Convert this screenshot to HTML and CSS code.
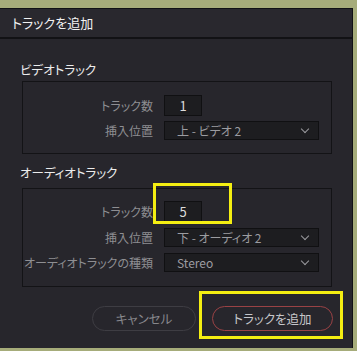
FILE: index.html
```html
<!DOCTYPE html>
<html lang="ja">
<head>
    <meta charset="UTF-8">
    <title>トラックを追加</title>
    <link rel="stylesheet" href="styles.css">
</head>
<body>
    <div class="dialog">
        <div class="titlebar">トラックを追加</div>
        <div class="content">
            <h2 class="section-title first">ビデオトラック</h2>
            <div class="group video">
                <label>トラック数</label>
                <div class="field num">1</div>
                <label>挿入位置</label>
                <div class="field select">上 - ビデオ 2<span class="chev"></span></div>
            </div>

            <h2 class="section-title">オーディオトラック</h2>
            <div class="group audio">
                <label>トラック数</label>
                <div class="field num">5</div>
                <label>挿入位置</label>
                <div class="field select">下 - オーディオ 2<span class="chev"></span></div>
                <label>オーディオトラックの種類</label>
                <div class="field select">Stereo<span class="chev"></span></div>
            </div>

            <div class="actions">
                <button class="btn cancel">キャンセル</button>
                <button class="btn add">トラックを追加</button>
            </div>
        </div>
        <div class="mark mark-count"></div>
        <div class="mark mark-add"></div>
    </div>
</body>
</html>
```

FILE: styles.css
```css
body {
    margin: 0;
    background-color: #a6ac7a;
    font-family: "Noto Sans CJK JP", "Noto Sans", sans-serif;
    font-feature-settings: "palt";
    font-size: 12px;
    height: 351px;
    overflow: hidden;
}
.dialog {
    position: relative;
    margin-top: 8px;
    width: 353px;
    height: 340px;
    background: #27262c;
    border-right: 1px solid #111114;
    border-top: 1px solid #111114;
    box-sizing: border-box;
}
.titlebar {
    height: 28px;
    line-height: 27px;
    padding-left: 12px;
    background: #29282e;
    color: #f2f2f2;
    font-size: 13px;
    border-bottom: 2px solid #121215;
}
.content {
    padding: 0 21px 0 22px;
}
.section-title {
    margin: 0;
    font-size: 12.5px;
    font-weight: normal;
    color: #ececec;
    margin-left: -2px;
    height: 22px;
    line-height: 22px;
}
.section-title.first {
    margin-top: 20px;
}
.video + .section-title {
    margin-top: 8px;
    margin-bottom: 4px;
}
.group {
    display: grid;
    grid-template-columns: 130px 155px;
    column-gap: 11px;
    row-gap: 5px;
    align-items: center;
    border: 1px solid #131316;
    width: 310px;
    box-sizing: border-box;
}
.group.video {
    padding: 13px 0 13px 0;
}
.group.audio {
    padding: 12px 0 14px 0;
    row-gap: 6px;
}
.group label {
    text-align: right;
    white-space: nowrap;
    color: #8e8e92;
    font-size: 12px;
}
.field {
    height: 19px;
    line-height: 19px;
    background: #1d1d20;
    border: 1px solid #101012;
    color: #b8b8bc;
    font-size: 12px;
    box-sizing: content-box;
}
.field.num {
    width: 36px;
    text-align: center;
    color: #dcdcdc;
    font-size: 13px;
}
.field.select {
    position: relative;
    height: 17px;
    line-height: 17px;
    padding-left: 12px;
    width: 141px;
    color: #9c9ca0;
    font-size: 12px;
}
.chev {
    position: absolute;
    right: 10px;
    top: 4px;
    width: 5px;
    height: 5px;
    border-right: 1.5px solid #9a9a9e;
    border-bottom: 1.5px solid #9a9a9e;
    transform: rotate(45deg);
}
.actions {
    display: flex;
    justify-content: flex-end;
    gap: 16px;
    margin-top: 19px;
}
.btn {
    height: 25px;
    border-radius: 13px;
    background: #27262c;
    font-family: inherit;
    font-feature-settings: "palt";
    font-size: 12.5px;
    cursor: pointer;
}
.btn.cancel {
    width: 104px;
    border: 1px solid #3e3d43;
    color: #88888c;
}
.btn.add {
    width: 121px;
    border: 1px solid #9a4245;
    color: #c6c6ca;
    margin-right: -2px;
}
.mark {
    position: absolute;
    border: 3px solid #f4ee12;
}
.mark-count {
    left: 153px;
    top: 174px;
    width: 73px;
    height: 35px;
}
.mark-add {
    left: 199px;
    top: 282px;
    width: 138px;
    height: 42px;
}
```
